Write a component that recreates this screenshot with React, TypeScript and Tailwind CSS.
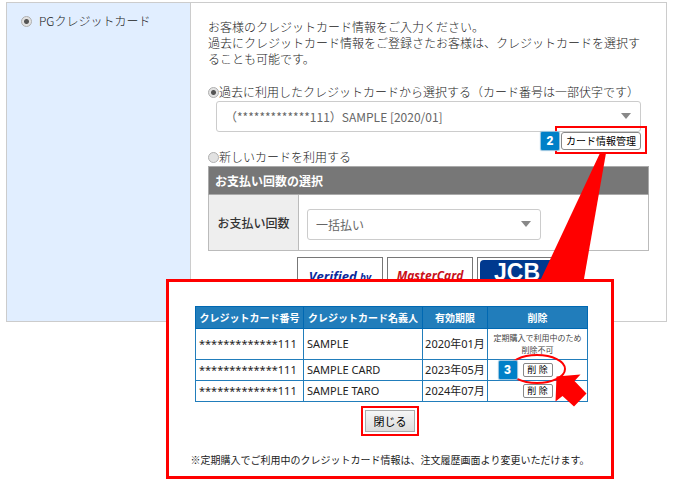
import type { ReactNode } from 'react'
import clsx from 'clsx'

const MASKED = '*************111'

const cards = [
  { holder: 'SAMPLE', expires: '2020年01月', locked: true },
  { holder: 'SAMPLE CARD', expires: '2023年05月', marked: true },
  { holder: 'SAMPLE TARO', expires: '2024年07月' },
]

function Radio({ id, name, checked }: { id: string; name: string; checked?: boolean }) {
  return (
    <input
      id={id}
      type="radio"
      name={name}
      defaultChecked={checked}
      className="h-[11px] w-[11px] shrink-0 appearance-none rounded-full border border-[#b0b0b0] bg-[#e2e2e2] checked:bg-[radial-gradient(circle,#555_0_2px,#e2e2e2_3px)]"
    />
  )
}

function Select({ id, label, className, children }: { id: string; label: string; className?: string; children: ReactNode }) {
  return (
    <div className={clsx('relative', className)}>
      <select
        id={id}
        aria-label={label}
        className="block h-[31px] w-full appearance-none rounded-[3px] border border-[#ccc] bg-white px-2 text-xs font-normal text-[#666]"
      >
        {children}
      </select>
      <svg className="pointer-events-none absolute top-3 right-2.5 h-1.5 w-2.5" viewBox="0 0 10 6">
        <path d="M0 0h10L5 6z" fill="#888" />
      </svg>
    </div>
  )
}

function Badge({ className, children }: { className?: string; children: ReactNode }) {
  return (
    <span
      className={clsx(
        'absolute flex h-[18px] w-[18px] items-center justify-center rounded-[1px] bg-[#0080c8] font-[Roboto,sans-serif] text-xs font-black text-white shadow-[0_0_1px_1px_#8fbfdd]',
        className
      )}
    >
      {children}
    </span>
  )
}

function CardManager() {
  return (
    <section className="absolute top-[279px] right-[63px] w-[448px] border-3 border-[#f00] bg-white pt-6 pb-2 font-normal">
      <table className="mr-auto ml-[26px] w-[393px] table-fixed border-collapse text-[11px] text-[#222]">
        <colgroup>
          <col className="w-[108px]" />
          <col className="w-[119px]" />
          <col className="w-[65px]" />
          <col />
        </colgroup>
        <thead>
          <tr className="h-[22px] bg-[#217dbb] text-[10px] leading-4 text-white">
            {['クレジットカード番号', 'クレジットカード名義人', '有効期限', '削除'].map((title) => (
              <th key={title} className="border border-[#0068b2] p-0 font-bold whitespace-nowrap">
                {title}
              </th>
            ))}
          </tr>
        </thead>
        <tbody className="font-['Noto_Sans','Noto_Sans_CJK_JP',sans-serif] leading-4">
          {cards.map((card) => (
            <tr key={card.holder} className={card.locked ? 'h-[31px]' : 'h-[21px]'}>
              <td className="border border-[#217dbb] px-[3px] py-0">{MASKED}</td>
              <td className="border border-[#217dbb] px-[3px] py-0">{card.holder}</td>
              <td className="border border-[#217dbb] p-0 text-center whitespace-nowrap">{card.expires}</td>
              <td className="border border-[#217dbb] p-0 text-center">
                {card.locked ? (
                  <p className="text-[8px] leading-3 text-[#444]">
                    定期購入で利用中のため
                    <br />
                    削除不可
                  </p>
                ) : (
                  <div className="relative mx-auto h-3.5 w-[30px]">
                    <button
                      type="button"
                      className="block h-3.5 w-full rounded-[2px] border border-[#888] bg-white text-[9px] leading-3 whitespace-nowrap text-black"
                    >
                      削 除
                    </button>
                    {card.marked && (
                      <>
                        <svg
                          className="pointer-events-none absolute -top-3 -left-4 z-10 h-[60px] w-[90px]"
                          viewBox="507 351 90 60"
                        >
                          <ellipse cx="537" cy="369" rx="28" ry="14" fill="none" stroke="#f00" strokeWidth="2" />
                          <path
                            d="M556.5 376.5 580.5 374.5 574.5 381 586.5 393.5 574 406.5 562.5 396 555.5 401.5z"
                            fill="#f00"
                          />
                        </svg>
                        <Badge className="-top-0.5 right-full z-20 mr-1.5">3</Badge>
                      </>
                    )}
                  </div>
                )}
              </td>
            </tr>
          ))}
        </tbody>
      </table>

      <div className="mx-auto mt-1 w-fit border-2 border-[#f00] p-0.5">
        <button
          type="button"
          className="block h-[22px] w-[50px] border border-[#aaa] bg-linear-to-b from-[#f6f6f6] to-[#dcdcdc] text-[11px] leading-4 text-black"
        >
          閉じる
        </button>
      </div>

      <p className="mt-4 text-center text-[10px] leading-4 text-[#222]">
        ※定期購入でご利用中のクレジットカード情報は、注文履歴画面より変更いただけます。
      </p>
    </section>
  )
}

export default function App() {
  return (
    <main className="relative min-h-screen bg-white pt-0.5 pr-2.5 pl-1.5 font-['Noto_Sans_CJK_JP',sans-serif] text-xs leading-4 font-light text-[#222]">
      <div className="flex h-80 border border-[#ccc]">
        <div className="flex w-[184px] shrink-0 items-start border-r border-[#ccc] bg-[#e1eeff] pt-2.5 pl-3.5">
          <div className="flex items-center gap-[7px]">
            <Radio id="pg" name="payment" checked />
            <label htmlFor="pg">PGクレジットカード</label>
          </div>
        </div>

        <div className="min-w-0 flex-1 pt-4 pr-[17px] pl-[17px]">
          <p>
            お客様のクレジットカード情報をご入力ください。
            <br />
            過去にクレジットカード情報をご登録さたお客様は、クレジットカードを選択することも可能です。
          </p>

          <div className="mt-[17px] flex items-center whitespace-nowrap">
            <Radio id="saved" name="card" checked />
            <label htmlFor="saved">過去に利用したクレジットカードから選択する（カード番号は一部伏字です）</label>
          </div>
          <Select id="saved-card" label="登録済みカード" className="mt-px mr-2 ml-2">
            <option>（{MASKED}）SAMPLE [2020/01]</option>
          </Select>

          {/* Manage button with its callout */}
          <div className="relative z-10 mr-2 flex h-[17px] justify-end">
            <div className="relative h-[18px] w-20">
              <span className="absolute -inset-x-1.5 -top-1.5 -bottom-1 border-2 border-[#f00]" />
              <button
                type="button"
                className="relative block h-[18px] w-full rounded-[3px] border border-[#888] bg-white text-[10px] leading-4 font-normal whitespace-nowrap text-black"
              >
                カード情報管理
              </button>
              <Badge className="top-0 right-full mr-0.5">2</Badge>
              <svg className="pointer-events-none absolute top-5 right-0 h-[127px] w-[100px]" viewBox="540 154 100 127">
                <path d="M599 155h6l-22 126H540z" fill="#f00" />
              </svg>
            </div>
          </div>

          <div className="flex items-center">
            <Radio id="new" name="card" />
            <label htmlFor="new">新しいカードを利用する</label>
          </div>

          <table className="mt-px w-full border-collapse text-[#333]">
            <thead>
              <tr className="h-7 bg-[#777] text-left text-white">
                <th colSpan={2} className="border border-[#aaa] px-1.5 py-0 font-bold">
                  お支払い回数の選択
                </th>
              </tr>
            </thead>
            <tbody>
              <tr className="h-14">
                <th className="w-[90px] border border-[#bbb] bg-[#eee] p-0 text-center font-medium">お支払い回数</th>
                <td className="border border-[#bbb] px-2 pt-1 pb-0">
                  <Select id="times" label="お支払い回数" className="max-w-[234px]">
                    <option>一括払い</option>
                  </Select>
                </td>
              </tr>
            </tbody>
          </table>

          {/* Card brands */}
          <div className="mt-1.5 ml-[89px] flex h-12 gap-1">
            <div className="w-[86px] border border-[#777] pt-2 text-center font-['Open_Sans',sans-serif] text-[13px] leading-5 font-bold whitespace-nowrap text-[#0a2a9c] italic">
              Verified <span className="text-[10px]">by</span>
            </div>
            <div className="w-[86px] border border-[#777] pt-2 text-center font-['Open_Sans',sans-serif] text-xs leading-5 font-bold text-[#c8101a] italic">
              MasterCard
            </div>
            <div className="w-[86px] border border-[#777] p-0.5">
              <div className="h-full rounded-t-[4px] bg-[#00398f] pl-3.5 font-['Liberation_Sans',sans-serif] text-[23px] leading-6 font-bold text-white">
                JCB
              </div>
            </div>
          </div>
        </div>
      </div>

      <CardManager />
    </main>
  )
}
